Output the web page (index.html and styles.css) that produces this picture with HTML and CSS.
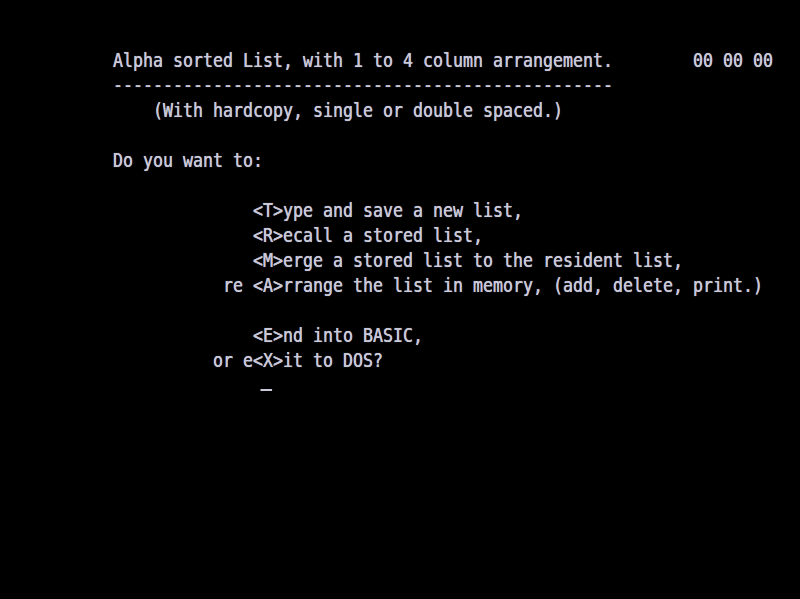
FILE: index.html
```html
<!DOCTYPE html>
<html>
<head>
<meta charset="utf-8">
<link rel="stylesheet" href="styles.css">
</head>
<body>
<div class="screen">
<pre class="term">


           Alpha sorted List, with 1 to 4 column arrangement.        00 00 00
           --------------------------------------------------
               (With hardcopy, single or double spaced.)

           Do you want to:

                         &lt;T&gt;ype and save a new list,
                         &lt;R&gt;ecall a stored list,
                         &lt;M&gt;erge a stored list to the resident list,
                      re &lt;A&gt;rrange the list in memory, (add, delete, print.)

                         &lt;E&gt;nd into BASIC,
                     or e&lt;X&gt;it to DOS?
                          <span class="cursor"></span>
</pre>
</div>
</body>
</html>
```

FILE: styles.css
```css
html, body {
  margin: 0;
  padding: 0;
  background: #000;
  width: 800px;
  height: 599px;
  overflow: hidden;
}

.screen {
  width: 800px;
  height: 599px;
  padding-left: 2.5px;
  box-sizing: border-box;
  background: #000;
}

.term {
  margin: 0;
  padding: 0;
  margin-top: -2.4px;
  font-family: "DejaVu Sans Mono", "Liberation Mono", monospace;
  font-size: 20px;
  line-height: 25px;
  color: #c9c9da;
  text-shadow: 0 0 1px rgba(200, 200, 220, 0.8), 0 0 0.5px rgba(200, 200, 220, 0.8);
  transform: scaleX(0.8305);
  transform-origin: 0 0;
  white-space: pre;
}

.cursor {
  display: inline-block;
  width: 14px;
  height: 2px;
  margin-left: -3px;
  background: #c9c9da;
  vertical-align: 1px;
}
```
